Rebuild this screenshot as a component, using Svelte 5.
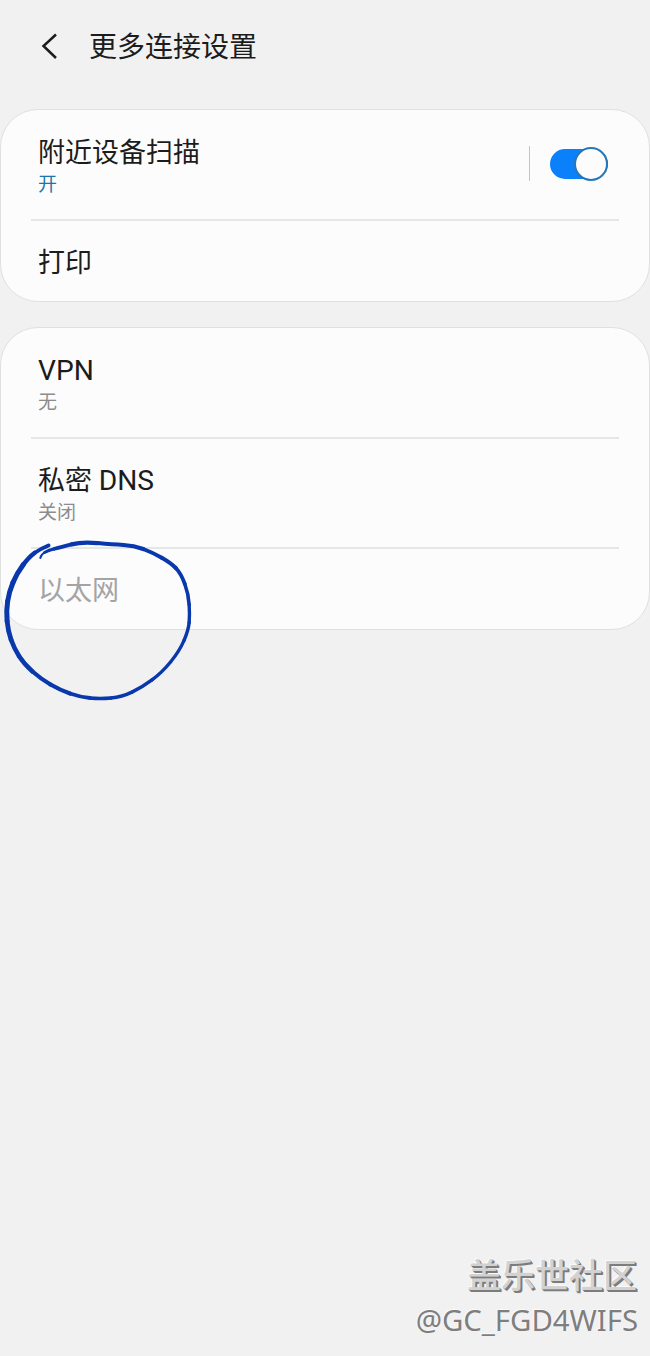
<script>
    let groups = [
        [
            {"title": "附近设备扫描", "status": "开", "toggle": true},
            {"title": "打印"}
        ],
        [
            {"title": "VPN", "status": "无"},
            {"title": "私密 DNS", "status": "关闭"},
            {"title": "以太网", "disabled": true}
        ]
    ];

    let scanning = true;

    // x, y and pen width along the marker line
    let pen = [
        [48.5, 545.5, 3], [40, 549, 4], [29, 557, 4.6], [17, 573, 5], [9, 592, 5], [6.2, 611, 5],
        [8, 631, 4.8], [14, 648, 4.6], [24, 664, 4.4], [41, 679, 4.2], [60, 690, 4.2], [80, 697, 3.8],
        [100, 699, 3.4], [122, 697, 3.4], [142, 687.3, 3.6], [162, 672.5, 3.4], [179.5, 651, 3.2],
        [188.5, 630, 3.4], [189.8, 615, 3.4], [188.5, 594, 3.6], [181, 573.5, 3.8], [171, 563, 4],
        [152.5, 552.5, 4], [134, 545.5, 4.2], [113, 544.5, 4], [82, 541.7, 4.2], [61, 547, 3.8],
        [48, 550.5, 3], [41, 554.5, 2], [40.3, 558, 1.2]
    ];

    function middle(a, b)
    {
        return [(a[0] + b[0]) / 2, (a[1] + b[1]) / 2];
    }

    function getSegments(points)
    {
        return points.slice(1, -1).map((p, i) => {
            let from = i == 0 ? points[0] : middle(points[i], p);
            let to = i == points.length - 3 ? points[i + 2] : middle(p, points[i + 2]);
            return {d: `M${from[0]} ${from[1]}Q${p[0]} ${p[1]} ${to[0]} ${to[1]}`, width: p[2]};
        });
    }

    // latin letters are set a little larger than the chinese ones
    function getParts(title)
    {
        return title.split(/([A-Z]+)/).filter((part) => part != "");
    }

    function toggle()
    {
        scanning = !scanning;
    }
</script>

<div class="screen">
    <header>
        <svg class="back" viewBox="0 0 20 30" width="20" height="30">
            <path d="M17 2.5 L4.5 14 L17 26" />
        </svg>
        <h1>更多连接设置</h1>
    </header>

    {#each groups as rows}
        <div class="card">
            {#each rows as row}
                <div class="row" class:short={!row.status} class:disabled={row.disabled}>
                    <div class="text">
                        <h2>{#each getParts(row.title) as part}<span class:latin={/[A-Z]/.test(part)}>{part}</span>{/each}</h2>
                        {#if row.status}
                            <p class:on={row.toggle}>{row.status}</p>
                        {/if}
                    </div>
                    {#if row.toggle}
                        <button class="switch" class:off={!scanning} aria-label={row.title} on:click={toggle}>
                            <span class="track"><span class="thumb"></span></span>
                        </button>
                    {/if}
                </div>
            {/each}
        </div>
    {/each}

    <footer>
        <div class="community">盖乐世社区</div>
        <div class="user">@GC_FGD4WIFS</div>
    </footer>

    <svg class="marker" viewBox="0 530 200 180" width="200" height="180">
        {#each getSegments(pen) as s}
            <path d={s.d} stroke-width={s.width} />
        {/each}
    </svg>
</div>

<style>
    .screen {
        position: relative;
        display: flex;
        flex-direction: column;
        box-sizing: border-box;
        width: 650px;
        height: 1356px;
        overflow: hidden;
        background-color: #f1f1f1;
        color: #1c1c1c;
        font-family: Roboto, "Noto Sans CJK SC", sans-serif;
    }

    header {
        display: flex;
        align-items: center;
        height: 93px;
        padding: 0 0 0 39px;
        margin-bottom: 16px;
    }

    .back {
        fill: none;
        stroke: #1c1c1c;
        stroke-width: 2.5;
    }

    h1 {
        margin: 2px 0 0 30px;
        font-size: 28px;
        font-weight: 400;
        line-height: 40px;
    }

    .card {
        box-sizing: border-box;
        padding: 0 30px;
        margin-bottom: 25px;
        border: 1px solid #e0e0e0;
        border-radius: 38px;
        background-color: #fcfcfc;
    }

    .row {
        display: flex;
        justify-content: space-between;
        align-items: center;
        box-sizing: border-box;
        height: 110px;
        padding: 0 11px 0 7px;
    }

    .row:first-child {
        height: 109px;
    }

    .row + .row {
        border-top: 2px solid #e6e6e6;
    }

    .row.short {
        height: 82px;
    }

    .text {
        padding-top: 2px;
    }

    .row:first-child .text {
        padding-top: 3px;
    }

    .short .text {
        padding-top: 3px;
    }

    h2 {
        margin: 0;
        font-size: 27px;
        font-weight: 400;
        line-height: 38px;
        height: 38px;
    }

    .latin {
        font-size: 28.2px;
    }

    p {
        margin: 0;
        color: #8c8c8c;
        font-size: 19px;
        line-height: 26px;
    }

    .on {
        color: #1c76a8;
    }

    .disabled h2 {
        color: #a4a4a4;
    }

    .switch {
        display: flex;
        align-items: center;
        height: 35px;
        padding: 0 0 0 20px;
        margin-bottom: 2px;
        border: 0;
        border-left: 1px solid #c4c4c4;
        background: none;
    }

    .track {
        display: flex;
        justify-content: flex-end;
        align-items: center;
        width: 58px;
        height: 30px;
        border-radius: 15px;
        background-color: #0a80fb;
    }

    .thumb {
        box-sizing: border-box;
        flex: none;
        width: 34px;
        height: 34px;
        border: 2px solid #2478b8;
        border-radius: 50%;
        background-color: #fcfcfc;
    }

    .off .track {
        justify-content: flex-start;
        background-color: #b0b0b0;
    }

    footer {
        margin-top: auto;
        padding: 0 12px 14px 0;
        text-align: right;
        color: #d2d2d2;
    }

    .community {
        padding-right: 1px;
        margin-bottom: 1px;
        font-family: "Noto Sans CJK SC", sans-serif;
        font-size: 34px;
        font-weight: 500;
        line-height: 46px;
        text-shadow: 1px 1px 0 #7c7c7c, 2px 2px 0 #7c7c7c, -1px -1px 0 #fafafa;
    }

    .user {
        color: #7e7e7e;
        font-family: "Noto Sans", sans-serif;
        font-size: 29.3px;
        line-height: 44px;
        text-shadow: -1px -1px 0 #fafafa;
    }

    .marker {
        position: absolute;
        left: 0;
        top: 530px;
        fill: none;
        stroke: #0838ac;
        stroke-linecap: round;
    }
</style>
